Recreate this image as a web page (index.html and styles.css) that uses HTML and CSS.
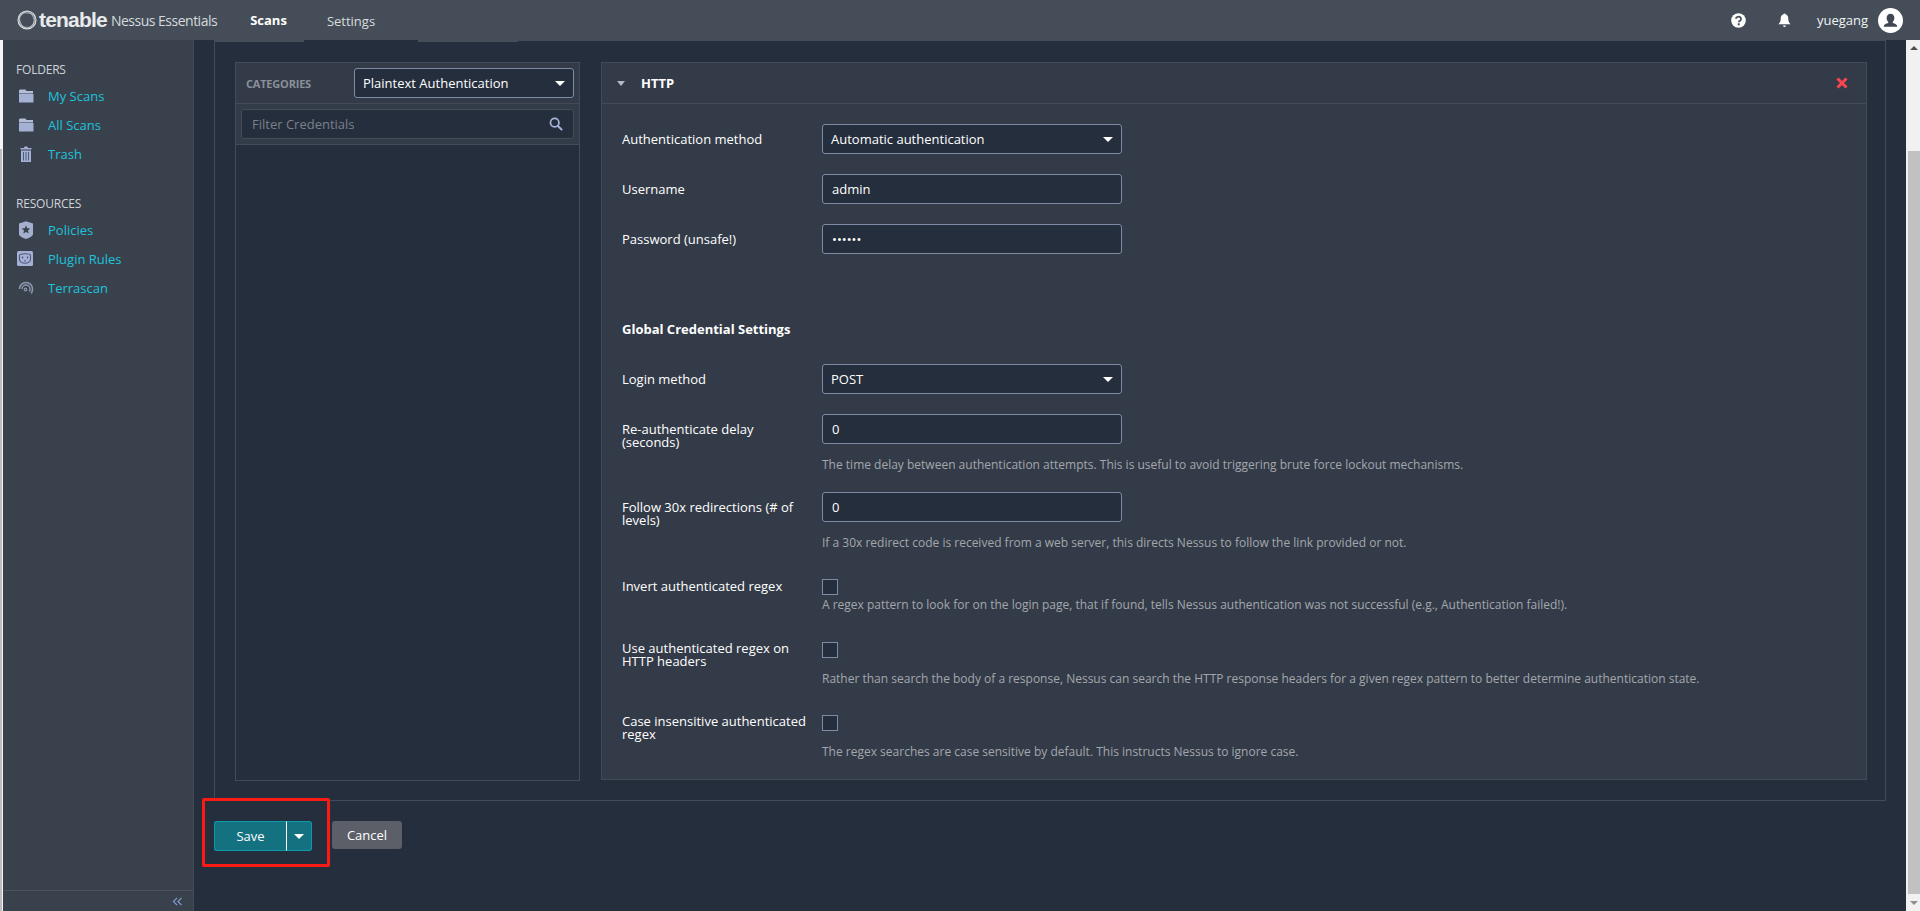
FILE: index.html
```html
<!DOCTYPE html>
<html lang="en">
<head>
<meta charset="utf-8">
<title>Nessus Essentials</title>
<link rel="stylesheet" href="styles.css">
</head>
<body>
<div class="app">
  <header class="topbar">
    <a class="brand">
      <svg class="brand-mark" viewBox="0 0 24 24" width="20" height="20" fill="none" stroke="#dfe2e5" stroke-width="1.3">
        <circle cx="12" cy="12" r="10.8"/>
        <path d="M12 1.400 21 7 20 17.500 12 22.600 3.500 17.500 3 7Z M7 3 17 4 22 13 16 21 7 20.500 2 11Z" stroke-width=".8"/>
      </svg>
      <span class="brand-name">tenable</span>
      <span class="brand-product">Nessus Essentials</span>
    </a>
    <nav class="tabs">
      <a class="tab tab-active">Scans</a>
      <a class="tab tab-plain">Settings</a>
      <span class="tab-notch"></span>
    </nav>
    <div class="top-actions">
      <svg class="top-icon" viewBox="0 0 16 16" width="15" height="15"><circle cx="8" cy="8" r="7.800" fill="#fff"/><path d="M5.300 6.200a2.700 2.400 0 1 1 4.300 2c-.9.600-1.200.900-1.200 1.700" fill="none" stroke="#454e58" stroke-width="1.900"/><rect x="7.200" y="11" width="2.100" height="2.100" fill="#454e58"/></svg>
      <svg class="top-icon bell" viewBox="1 0 14 16" width="13" height="15"><path d="M8 .5c.7 0 1 .4 1 .9 2 .5 3 2.200 3 4.300 0 3 .8 4.800 2.500 6.300h-13C3.200 10.500 4 8.700 4 5.700c0-2.100 1-3.800 3-4.300C7 .9 7.300.5 8 .5Z" fill="#fff"/><path d="M6.300 13.500h3.400a1.700 1.500 0 0 1-3.400 0Z" fill="#fff"/></svg>
      <span class="user-name">yuegang</span>
      <span class="avatar">
        <svg viewBox="0 0 24 24" width="25" height="25"><circle cx="12" cy="12" r="12" fill="#fff"/><path d="M12 5.500c2.300 0 3.700 1.700 3.700 4 0 1.600-.7 3-1.500 3.800v1.200c2 .7 4.300 1.300 4.300 3.500H5.500c0-2.200 2.300-2.800 4.300-3.500v-1.200C9 12.500 8.300 11.100 8.300 9.500c0-2.300 1.400-4 3.700-4Z" fill="#3f4852"/></svg>
      </span>
    </div>
  </header>
  <div class="workspace">
    <div class="edge"></div>
    <aside class="sidebar">
      <div class="side-scroll">
        <h3 class="side-heading">FOLDERS</h3>
        <ul class="side-list">
          <li class="side-item"><svg class="side-icon" viewBox="0 0 16 16"><path d="M2 1.500h5.500l1 1.500H15v2.500H1V2.500Z" fill="#b4bdd8"/><path d="M1 6h14.500v8.500H1Z" fill="#a5b0d5"/></svg>My Scans</li>
          <li class="side-item"><svg class="side-icon" viewBox="0 0 16 16"><path d="M2 1.500h5.500l1 1.500H15v2.500H1V2.500Z" fill="#b4bdd8"/><path d="M1 6h14.500v8.500H1Z" fill="#a5b0d5"/></svg>All Scans</li>
          <li class="side-item"><svg class="side-icon" viewBox="0 0 16 16"><path d="M2.500 2h3.500l.5-1.500h3l.5 1.500h3.500v1.500h-11ZM3 4.500h10V16H3Z" fill="#a5b0d5"/><path d="M5.500 6v8.500M8 6v8.500M10.500 6v8.500" stroke="#4f5a78" stroke-width="1"/></svg>Trash</li>
        </ul>
        <h3 class="side-heading side-heading-lower">RESOURCES</h3>
        <ul class="side-list">
          <li class="side-item"><svg class="side-icon" viewBox="0 0 16 16"><path d="M8-.8 15 1.500V12c0 2-3.500 3.800-7 5-3.500-1.200-7-3-7-5V1.500Z" fill="#a5b0d0"/><path d="m8 3.500 1.300 2.800 3 .3-2.300 2 .7 3L8 10 5.300 11.600l.7-3-2.300-2 3-.3Z" fill="#3a424d"/></svg>Policies</li>
          <li class="side-item"><svg class="side-icon" viewBox="0 0 16 16"><rect x="-1" y="0" width="16" height="15" rx="1.500" fill="#a5b0d5"/><path d="M1.500 4.500C1.500 3.500 3 2.800 7 2.800s5.500.7 5.500 1.700v4c0 2-2.500 3.700-5.500 3.700S1.500 10.500 1.500 8.500Z" fill="none" stroke="#4f5a78" stroke-width="1.100"/><path d="M4.500 5.500v2M9.500 5.500v2M7 9v1.500" stroke="#4f5a78" stroke-width="1.300"/></svg>Plugin Rules</li>
          <li class="side-item"><svg class="side-icon" viewBox="0 0 16 16" fill="none" stroke="#8d97b0"><path d="M1.500 9a6.500 6.500 0 0 1 13 0c0 1.700-.5 3.200-1.200 4.500" stroke-width="1.600"/><path d="M4 9a4 4 0 0 1 8 0c0 1-.3 1.800-.7 2.500" stroke-width="1.400"/><circle cx="7.500" cy="9.500" r="1.300" stroke-width="1.200"/></svg>Terrascan</li>
        </ul>
      </div>
      <div class="side-foot">
        <svg viewBox="0 0 12 10" width="11" height="9" fill="none" stroke="#7e9ad0" stroke-width="1.400"><path d="M5.500 1 1.500 5l4 4M10.500 1l-4 4 4 4"/></svg>
      </div>
    </aside>
    <main class="main">
      <section class="panel-frame">
        <div class="cat-col">
          <div class="cat-head">
            <span class="cat-label">CATEGORIES</span>
            <div class="select select-cat"><span>Plaintext Authentication</span><i class="caret"></i></div>
          </div>
          <div class="cat-filter">
            <div class="filter-box">
              <span class="filter-ph">Filter Credentials</span>
              <svg viewBox="0 0 16 16" width="14" height="14" fill="none" stroke="#a5b4d8" stroke-width="2"><circle cx="6.500" cy="6.500" r="4.800"/><path d="m10 10 5 5" stroke-width="2.400"/></svg>
            </div>
          </div>
        </div>
        <div class="cred-col">
          <div class="cred-head">
            <i class="caret caret-muted"></i>
            <span class="cred-title">HTTP</span>
            <svg class="cred-close" viewBox="0 0 12 12" width="12" height="12"><path d="M1.500 1.500l9 9M10.500 1.500l-9 9" stroke="#f9454f" stroke-width="3"/></svg>
          </div>
          <div class="cred-body">
            <div class="row row-a">
              <label class="row-label">Authentication method</label>
              <div class="row-ctl"><div class="select"><span>Automatic authentication</span><i class="caret"></i></div></div>
            </div>
            <div class="row row-a">
              <label class="row-label">Username</label>
              <div class="row-ctl"><div class="input">admin</div></div>
            </div>
            <div class="row row-a">
              <label class="row-label">Password (unsafe!)</label>
              <div class="row-ctl"><div class="input input-pw">••••••</div></div>
            </div>
            <h4 class="subhead">Global Credential Settings</h4>
            <div class="row row-a">
              <label class="row-label">Login method</label>
              <div class="row-ctl"><div class="select"><span>POST</span><i class="caret"></i></div></div>
            </div>
            <div class="row row-b">
              <label class="row-label">Re-authenticate delay (seconds)</label>
              <div class="row-ctl"><div class="input">0</div><p class="hint">The time delay between authentication attempts. This is useful to avoid triggering brute force lockout mechanisms.</p></div>
            </div>
            <div class="row row-c">
              <label class="row-label">Follow 30x redirections (# of levels)</label>
              <div class="row-ctl"><div class="input">0</div><p class="hint">If a 30x redirect code is received from a web server, this directs Nessus to follow the link provided or not.</p></div>
            </div>
            <div class="row row-d">
              <label class="row-label">Invert authenticated regex</label>
              <div class="row-ctl"><div class="check"></div><p class="hint hint-tight">A regex pattern to look for on the login page, that if found, tells Nessus authentication was not successful (e.g., Authentication failed!).</p></div>
            </div>
            <div class="row row-e">
              <label class="row-label">Use authenticated regex on HTTP headers</label>
              <div class="row-ctl"><div class="check"></div><p class="hint">Rather than search the body of a response, Nessus can search the HTTP response headers for a given regex pattern to better determine authentication state.</p></div>
            </div>
            <div class="row row-e">
              <label class="row-label">Case insensitive authenticated regex</label>
              <div class="row-ctl"><div class="check"></div><p class="hint">The regex searches are case sensitive by default. This instructs Nessus to ignore case.</p></div>
            </div>
          </div>
        </div>
      </section>
      <div class="actions">
        <div class="save-group">
          <button class="btn-save">Save</button>
          <button class="btn-save-more"><i class="caret"></i></button>
        </div>
        <button class="btn-cancel">Cancel</button>
        <div class="annot"></div>
      </div>
    </main>
    <div class="scrollbar">
      <i class="sb-up"></i>
      <div class="sb-track"><div class="sb-thumb"></div></div>
      <i class="sb-down"></i>
    </div>
  </div>
</div>
</body>
</html>
```
FILE: styles.css
```css
* { box-sizing: border-box; }
html, body { margin: 0; height: 911px; overflow: hidden; }
body { font-family: "Open Sans", sans-serif; font-size: 13px; color: #fff; background: #252e3c; }
.app { display: flex; flex-direction: column; height: 911px; }
.topbar { height: 40px; flex: none; display: flex; align-items: center; background: #454e58; position: relative; z-index: 2; }
.brand { display: flex; align-items: center; margin-left: 17px; width: 198px; flex: none; position: relative; z-index: 1; }
.brand-mark { flex: none; }
.brand-name { font-family: "Liberation Sans", sans-serif; font-weight: 700; font-size: 21px; letter-spacing: -.8px; color: #e8eaec; margin-left: 2px; }
.brand-product { font-size: 14px; letter-spacing: -.5px; color: #d4d8dc; margin-left: 4px; white-space: nowrap; }
.tabs { display: flex; align-self: flex-start; align-items: flex-start; }
.tab { display: flex; align-items: center; justify-content: center; color: #d9dcdf; background: #454e58; }
.tab-active { width: 89px; height: 42px; padding: 0 0 2px 18px; font-weight: 700; color: #fff; }
.tab-plain { width: 114px; height: 41px; padding: 2px 20px 0 0; border-bottom: 1px solid #252e3c; }
.tab-notch { width: 100px; height: 42px; background: #454e58; }
.top-actions { margin-left: auto; display: flex; align-items: center; padding-right: 17px; }
.top-icon { flex: none; }
.bell { margin-left: 32px; }
.user-name { margin-left: 26px; color: #f0f2f3; }
.avatar { display: flex; margin-left: 10px; }
.workspace { flex: 1; display: flex; min-height: 0; }
.edge { width: 3px; flex: none; background: linear-gradient(#bdbdbd, #bdbdbd) 0 109px / 2px 100% no-repeat, #f5f5f5; }
.sidebar { width: 191px; flex: none; display: flex; flex-direction: column; background: #39414c; border-right: 1px solid #434b57; }
.side-scroll { flex: 1; padding: 22px 0 0 13px; }
.side-heading { margin: 0; font-size: 12px; font-weight: 400; color: #d0d3d8; line-height: 16px; letter-spacing: -.2px; }
.side-heading-lower { margin-top: 28px; }
.side-list { list-style: none; margin: 3px 0 0; padding: 0; }
.side-item { display: flex; align-items: center; height: 29px; color: #1fc3dc; font-size: 13px; }
.side-icon { width: 16px; height: 16px; margin: 0 14px 0 2px; flex: none; overflow: visible; }
.side-foot { height: 21px; flex: none; display: flex; align-items: center; justify-content: flex-end; padding-right: 10px; border-top: 1px solid #4b535f; }
.main { flex: 1; min-width: 0; padding: 0 20px; display: flex; flex-direction: column; }
.panel-frame { height: 761px; flex: none; display: flex; align-items: flex-start; padding: 21px 18px 0 20px; border: 1px solid #434b57; gap: 21px; }
.cat-col { width: 345px; height: 719px; flex: none; border: 1px solid #434b57; }
.cat-head { height: 41px; display: flex; align-items: center; background: #343b48; border-bottom: 1px solid #434b57; padding: 0 5px 0 10px; }
.cat-label { font-size: 11px; font-weight: 700; color: #8a909a; letter-spacing: -.2px; width: 108px; flex: none; }
.select, .input { height: 30px; display: flex; align-items: center; background: #252e3c; border: 1px solid #7d8ba5; border-radius: 3px; }
.select { justify-content: space-between; padding: 0 8px; }
.select-cat { flex: 1; }
.input { padding: 0 9px; }
.caret { display: block; width: 0; height: 0; border-left: 5.5px solid transparent; border-right: 5.5px solid transparent; border-top: 5.5px solid #fff; flex: none; }
.caret-muted { border-top-color: #b5bac2; border-left-width: 4.5px; border-right-width: 4.5px; border-top-width: 5px; }
.cat-filter { height: 41px; background: #343b48; border-bottom: 1px solid #434b57; padding: 5px; }
.filter-box { height: 30px; display: flex; align-items: center; justify-content: space-between; padding: 0 10px; background: #252e3c; border: 1px solid #434b57; border-radius: 3px; }
.filter-ph { color: #7a808a; }
.cred-col { flex: 1; min-width: 0; height: 718px; background: #343b48; border: 1px solid #434b57; }
.cred-head { height: 41px; display: flex; align-items: center; border-bottom: 1px solid #434b57; padding: 0 18px 0 15px; }
.cred-title { font-weight: 700; margin-left: 16px; }
.cred-close { margin-left: auto; }
.cred-body { padding: 20px 0 0 20px; }
.row { display: flex; align-items: flex-start; }
.row-a { height: 50px; }
.row-b { height: 78px; }
.row-c { height: 87px; }
.row-d { height: 63px; }
.row-e { height: 73px; }
.row-label { width: 200px; flex: none; padding-right: 14px; line-height: 13px; }
.row-a .row-label, .row-b .row-label, .row-c .row-label { padding-top: 9px; }
.row-d .row-label { padding-top: 1px; }
.row-ctl { flex: 1; min-width: 0; }
.row-ctl .select, .row-ctl .input { width: 300px; }
.subhead { margin: 46px 0 0; height: 44px; font-size: 13px; font-weight: 700; line-height: 18px; }
.hint { margin: 13px 0 0; font-size: 12px; line-height: 16px; color: #a3a7ad; white-space: nowrap; }
.hint-tight { margin-top: 2px; }
.check { width: 16px; height: 16px; background: #252e3c; border: 1px solid #7d8ba5; }
.actions { display: flex; align-items: flex-start; gap: 20px; padding-top: 20px; position: relative; }
.save-group { display: flex; }
.btn-save, .btn-save-more, .btn-cancel { font: inherit; font-size: 13px; color: #fff; height: 30px; padding: 0; display: flex; align-items: center; justify-content: center; }
.btn-save { width: 72px; background: #137180; border: 1px solid #0e9aad; border-right: 0; border-radius: 3px 0 0 3px; }
.btn-save-more { width: 26px; background: #137180; border: 1px solid #0e9aad; border-left: 1px solid #fff; border-radius: 0 3px 3px 0; }
.btn-cancel { width: 70px; height: 28px; background: #5c5f68; border: 0; border-radius: 3px; }
.annot { position: absolute; left: -12px; top: -3px; width: 128px; height: 69px; border: 3px solid #fb1a14; border-radius: 2px; }
.scrollbar { width: 14px; flex: none; display: flex; flex-direction: column; align-items: center; background: #f1f1f1; }
.sb-up, .sb-down { display: block; height: 17px; flex: none; width: 14px; position: relative; }
.sb-up::after { content: ""; position: absolute; left: 4px; top: 6px; border-left: 4px solid transparent; border-right: 4px solid transparent; border-bottom: 4px solid #505050; }
.sb-down::after { content: ""; position: absolute; left: 4px; top: 7px; border-left: 4px solid transparent; border-right: 4px solid transparent; border-top: 4px solid #8f8f8f; }
.sb-track { flex: 1; width: 100%; padding: 94px 0 0 2px; }
.sb-thumb { height: 743px; width: 12px; background: #c1c1c1; }
```
